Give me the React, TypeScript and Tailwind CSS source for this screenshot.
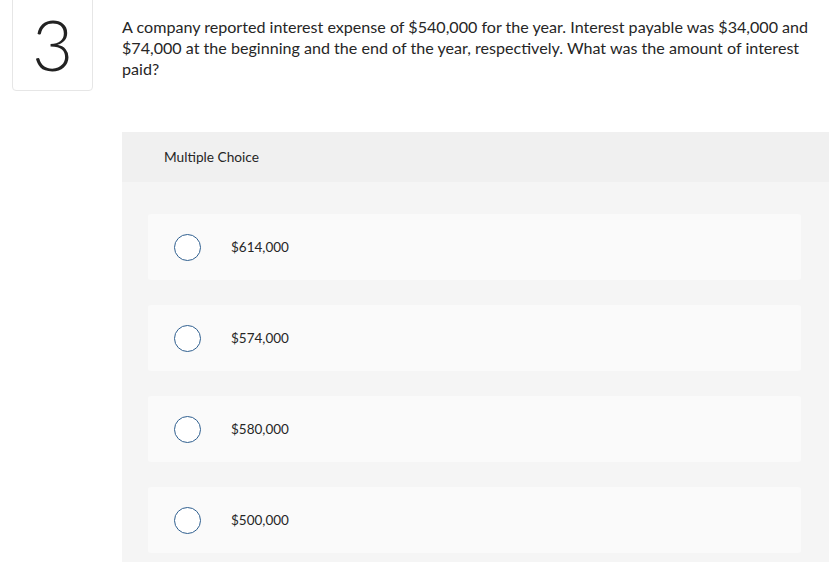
import React from "react";

const options = ["$614,000", "$574,000", "$580,000", "$500,000"];

export default function App() {
  return (
    <div className="w-[840px] h-[562px] overflow-hidden bg-white text-[#1f1f1f] font-['Lato',sans-serif]">
      <div className="flex">
        <div className="ml-[12px] mt-[-4px] w-[81px] h-[95px] border border-[#e6e6e6] rounded-[4px] flex items-center justify-center shrink-0">
          <span className="text-[71px] font-light leading-none text-[#222] mt-[0px]">3</span>
        </div>
        <div className="ml-[29px] w-[707px]">
          <p className="mt-[16px] h-[63px] text-[16.1px] leading-[21px] text-[#262626]">
            A company reported interest expense of $540,000 for the year. Interest payable was $34,000 and $74,000 at the beginning and the end of the year, respectively. What was the amount of interest paid?
          </p>
          <div className="mt-[53px]">
            <div className="h-[50px] bg-[#f0f0f0] flex items-center pl-[42px] text-[13.7px] text-[#262626]">
              Multiple Choice
            </div>
            <div className="bg-[#f5f5f5] h-[420px] pt-[32px] pl-[26px] pr-[28px] flex flex-col gap-[25px]">
              {options.map((o) => (
                <div key={o} className="h-[66px] bg-[#fafafa] rounded-[3px] flex items-center">
                  <div className="ml-[26px] w-[27px] h-[27px] rounded-full border-[1.5px] border-[#2f5f8f] bg-white shrink-0" />
                  <span className="ml-[30px] text-[13.5px] text-[#262626]">{o}</span>
                </div>
              ))}
            </div>
          </div>
        </div>
      </div>
    </div>
  );
}
